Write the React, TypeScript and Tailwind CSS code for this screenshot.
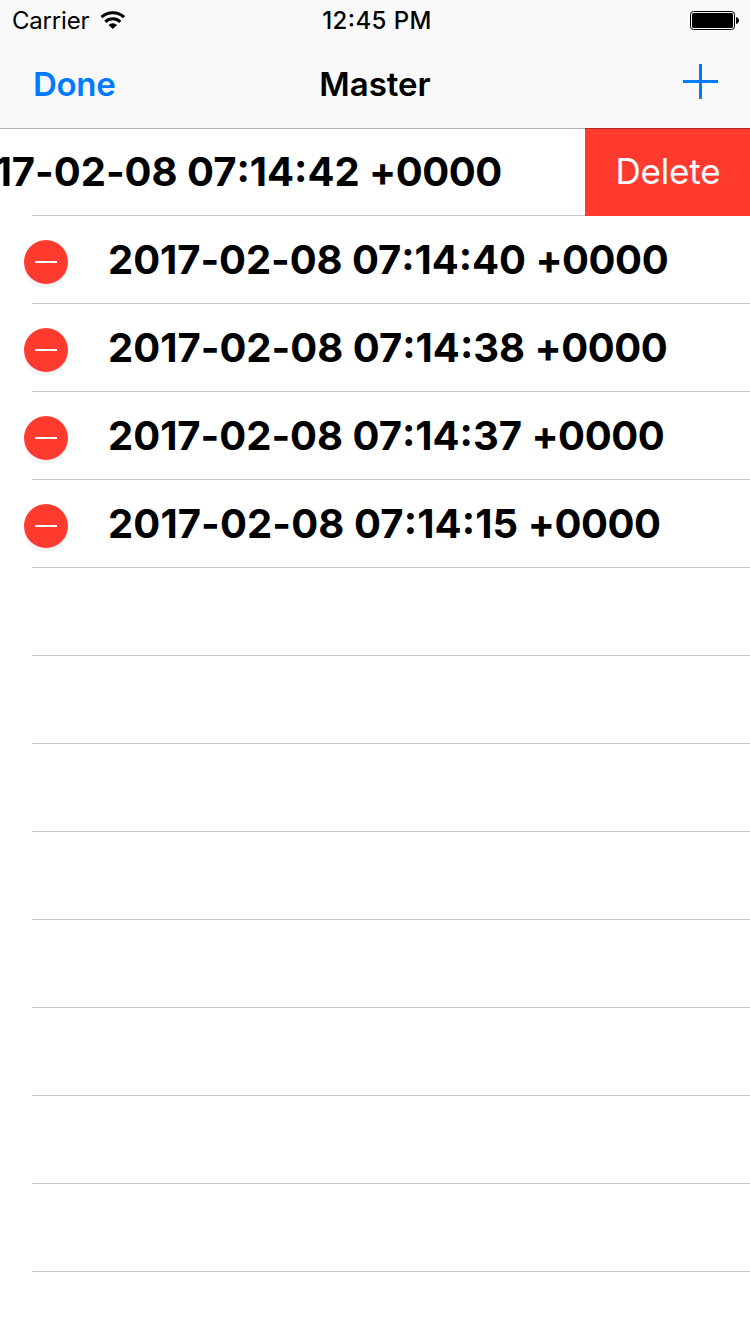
import { Fragment } from "react";

type Entry = { date: string; time: string; spacing: string };

const swiped: Entry = { date: "2017-02-08", time: "07:14:42", spacing: "tracking-[-0.02px]" };
const rows: Entry[] = [
  { date: "2017-02-08", time: "07:14:40", spacing: "tracking-[-0.07px]" },
  { date: "2017-02-08", time: "07:14:38", spacing: "tracking-[0px]" },
  { date: "2017-02-08", time: "07:14:37", spacing: "tracking-[-0.02px]" },
  { date: "2017-02-08", time: "07:14:15", spacing: "tracking-[0.11px]" },
];

/** Clock digits with colons centred on the digit height. */
function Clock({ value }: { value: string }) {
  return value.split(":").map((part, i) => (
    <Fragment key={i}>
      {i > 0 && <span className="[font-feature-settings:'case'_1]">:</span>}
      {part}
    </Fragment>
  ));
}

function Stamp({ entry }: { entry: Entry }) {
  return (
    <span className={`pt-px text-[40px] leading-[48px] font-bold whitespace-nowrap [font-feature-settings:'calt'_0] ${entry.spacing}`}>
      {entry.date} <Clock value={entry.time} /> <span className="tracking-[-0.45px]">+0000</span>
    </span>
  );
}

export default function App() {
  return (
    <div className="flex h-[1334px] w-[750px] flex-col overflow-hidden bg-white font-['Inter',sans-serif] text-black">
      <header className="relative h-32 shrink-0 bg-[#f9f9f9]">
        <div className="grid h-[42px] grid-cols-3 items-center pr-[11px] pl-3">
          <div className="flex items-center gap-[11px] text-[24px]">
            <span className="tracking-[-0.2px]">Carrier</span>
            <svg className="-mt-0.5" width="26" height="20" viewBox="0 0 26 20" fill="none" stroke="black" strokeWidth="3">
              <path d="M1.5 7.2a16.5 16.5 0 0 1 22.6 0M5.3 11.8a10.8 10.8 0 0 1 15 0" />
              <path d="M8.5 15a6.5 6.5 0 0 1 8.6 0L12.8 19z" fill="black" stroke="none" />
            </svg>
          </div>
          <span className="pl-[3px] text-center text-[24px] font-medium tracking-[0.4px] [font-feature-settings:'calt'_0]">
            <Clock value="12:45 PM" />
          </span>
          <svg className="-mt-0.5 justify-self-end" width="49" height="19" viewBox="0 0 49 19">
            <rect x=".5" y=".5" width="44" height="18" rx="3" fill="none" stroke="black" />
            <rect x="2" y="2" width="41" height="15" rx="1.5" />
            <path d="M46 6q3 1 3 3.5T46 13z" />
          </svg>
        </div>
        <div className="grid h-[86px] grid-cols-3 items-center px-8">
          <span className="pl-px text-[33px] font-semibold tracking-[-0.3px] text-[#007aff]">Done</span>
          <span className="text-center text-[33px] font-semibold">Master</span>
          <svg className="-mt-[7px] justify-self-end" width="35" height="35"><path d="M0 17.5h35M17.5 0v35" stroke="#007aff" strokeWidth="3" /></svg>
        </div>
        <div className="absolute inset-x-0 top-full h-px bg-black/30" />
      </header>
      <main>
        <div className="flex h-[88px]">
          <div className="w-8 shrink-0" />
          <div className="flex min-w-0 flex-1 items-center border-b border-[#c8c7cc]">
            <div className="-ml-[89.5px] flex"><Stamp entry={swiped} /></div>
          </div>
          <div className="flex w-[165px] items-center justify-center bg-[#ff3b30] pb-0.5 pl-px text-[35px] tracking-[-0.2px] text-white">Delete</div>
        </div>
        {rows.map((row) => (
          <div key={row.time} className="flex h-[88px] pl-6">
            <div className="z-10 mt-6 -mr-9 flex size-11 shrink-0 items-center justify-center rounded-full bg-[#ff3b30] shadow-[0_4px_1px_rgba(0,0,0,0.05)]"><div className="h-0.5 w-[22px] bg-white" /></div>
            <div className="flex flex-1 items-center border-b border-[#c8c7cc] pl-[76px]"><Stamp entry={row} /></div>
          </div>
        ))}
        {Array.from({ length: 8 }, (_, i) => <div key={i} className="ml-8 h-[88px] border-b border-[#c8c7cc]" />)}
      </main>
    </div>
  );
}
